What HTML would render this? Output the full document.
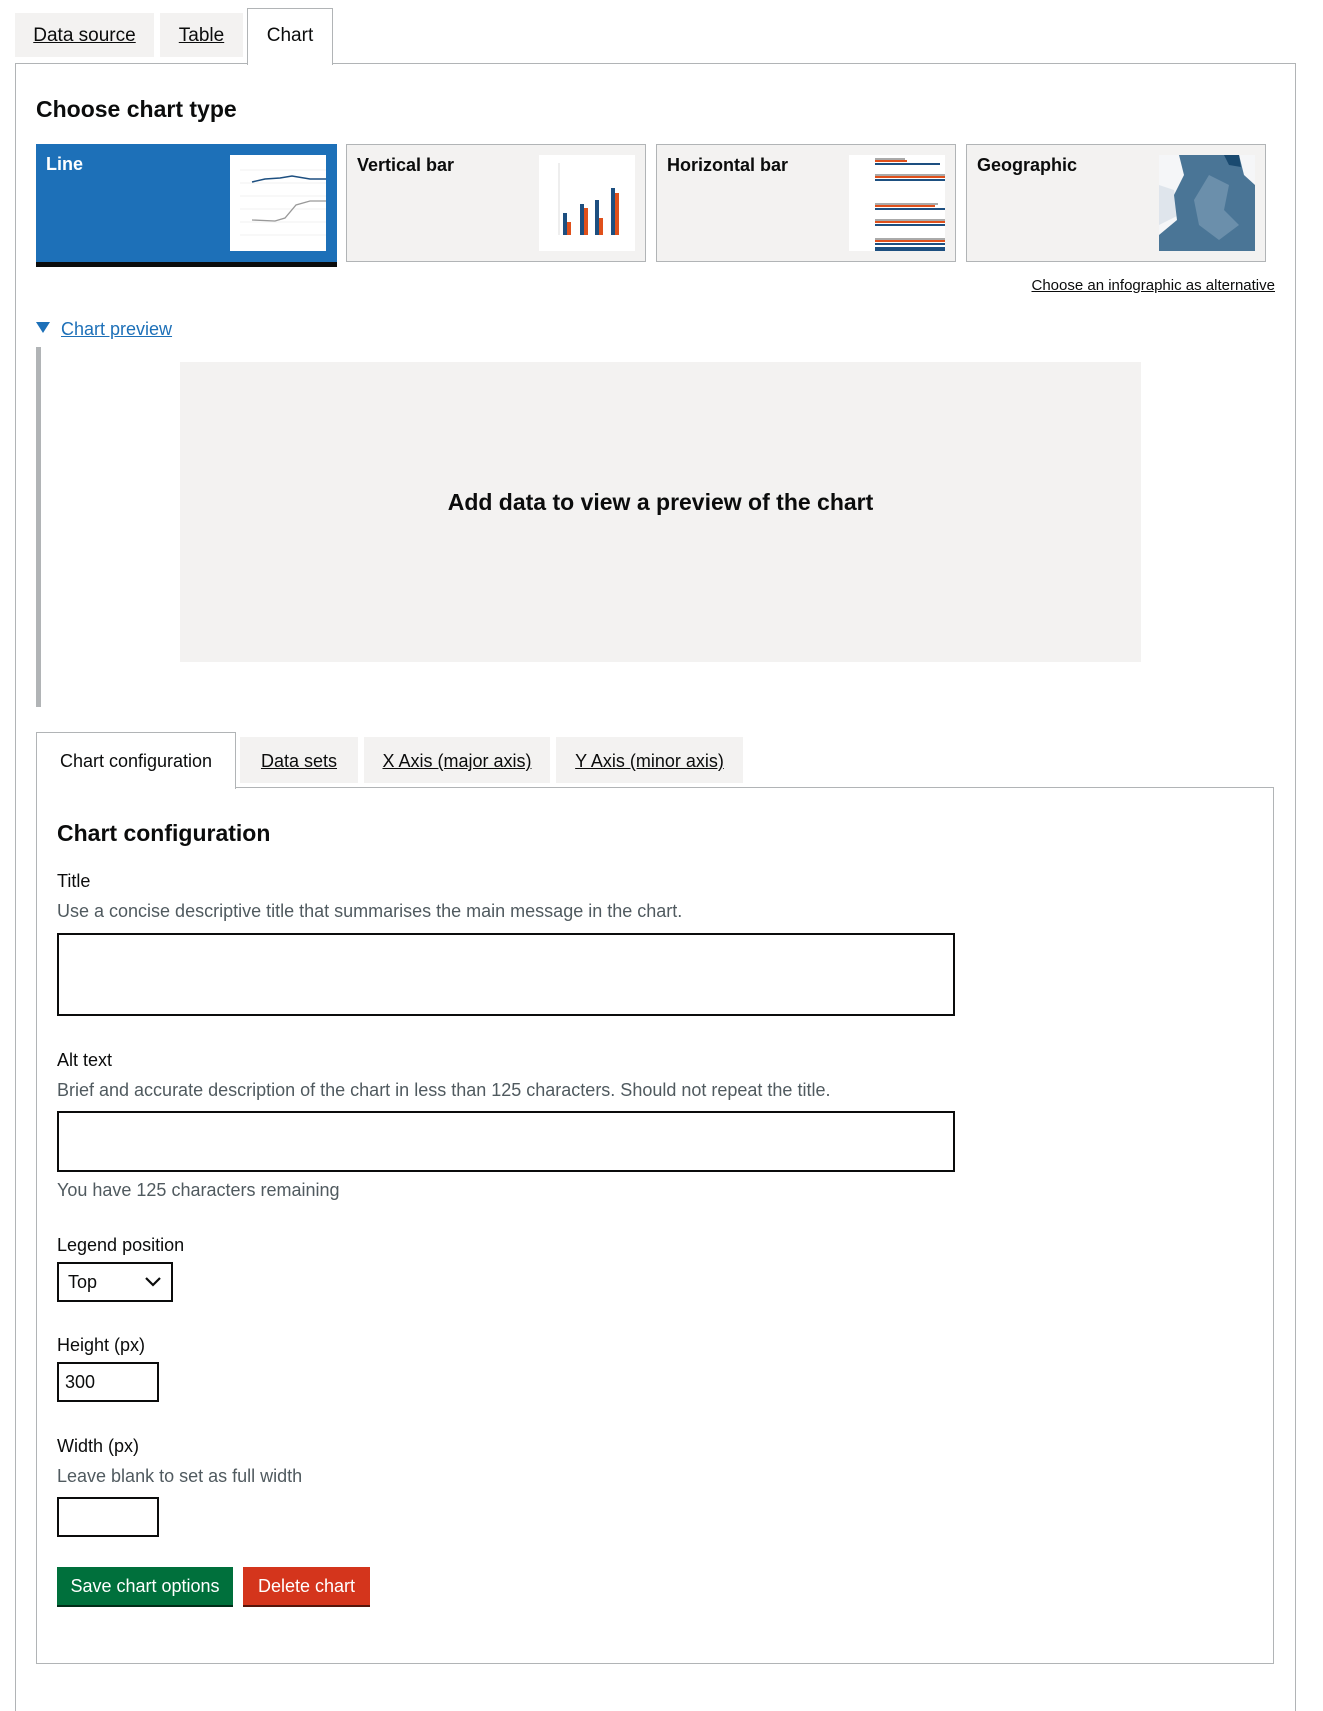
<!DOCTYPE html>
<html style="overflow:hidden;width:1323px;height:1711px"><head><meta charset="utf-8"><style>
*{box-sizing:border-box;margin:0;padding:0}
body{width:1323px;height:1711px;background:#fff;font-family:"Liberation Sans",Arial,sans-serif;color:#0b0c0c;position:relative;overflow:hidden}
.a{position:absolute}
.tab{position:absolute;background:#f3f2f1;font-size:19px;text-align:center;text-decoration:underline;color:#0b0c0c}
.card{position:absolute;background:#f3f2f1;border:1px solid #b1b4b6;font-weight:bold;font-size:18px;padding:10px 0 0 10px}
.thumb{position:absolute;background:#fff}
.lbl{position:absolute;left:57px;font-size:18px}
.hint{position:absolute;left:57px;font-size:18px;color:#505a5f}
.inp{position:absolute;left:57px;border:2px solid #0b0c0c;background:#fff}
</style></head><body>
<div class="a" style="left:15px;top:63px;width:1281px;height:1648px;border:1px solid #b1b4b6;border-bottom:none"></div>
<div class="tab" style="left:15px;top:13px;width:139px;height:44px;line-height:46px">Data source</div>
<div class="tab" style="left:160px;top:13px;width:83px;height:44px;line-height:46px">Table</div>
<div class="a" style="left:247px;top:8px;width:86px;height:57px;background:#fff;border:1px solid #b1b4b6;border-bottom:none;font-size:19px;text-align:center;line-height:54px">Chart</div>

<div class="a" style="left:36px;top:96px;font-size:23px;font-weight:bold">Choose chart type</div>

<div class="card" style="left:36px;top:144px;width:301px;height:123px;background:#1d70b8;border:none;border-bottom:5px solid #0b0c0c;color:#fff">Line
<svg class="thumb" style="left:194px;top:11px" width="96" height="96" viewBox="0 0 96 96"><g stroke="#eee" stroke-width="0.7"><line x1="10" y1="15" x2="96" y2="15"/><line x1="10" y1="28" x2="96" y2="28"/><line x1="10" y1="41" x2="96" y2="41"/><line x1="10" y1="54" x2="96" y2="54"/><line x1="10" y1="67" x2="96" y2="67"/><line x1="10" y1="80" x2="96" y2="80"/></g><polyline points="22,27 35,24 50,23 62,21 80,24 96,24" fill="none" stroke="#1d4f80" stroke-width="1.5"/><polyline points="22,65 45,66 55,63 66,50 80,46 96,46" fill="none" stroke="#999" stroke-width="1.3"/></svg></div>
<div class="card" style="left:346px;top:144px;width:300px;height:118px">Vertical bar
<svg class="thumb" style="left:192px;top:10px" width="96" height="96" viewBox="0 0 96 96"><line x1="20" y1="8" x2="20" y2="80" stroke="#ddd"/><rect x="24" y="58" width="4" height="22" fill="#1d4f80"/><rect x="28" y="67" width="4" height="13" fill="#e0501b"/><rect x="41" y="49" width="4" height="31" fill="#1d4f80"/><rect x="45" y="53" width="4" height="27" fill="#e0501b"/><rect x="56" y="45" width="4" height="35" fill="#1d4f80"/><rect x="60" y="63" width="4" height="17" fill="#e0501b"/><rect x="72" y="33" width="4" height="47" fill="#1d4f80"/><rect x="76" y="38" width="4" height="42" fill="#e0501b"/></svg></div>
<div class="card" style="left:656px;top:144px;width:300px;height:118px">Horizontal bar
<svg class="thumb" style="left:192px;top:10px" width="96" height="96" viewBox="0 0 96 96"><g><rect x="26" y="3" width="30" height="2" fill="#aaa"/><rect x="26" y="5" width="32" height="2" fill="#e0501b"/><rect x="26" y="8" width="65" height="2" fill="#1d4f80"/><rect x="26" y="19" width="70" height="2" fill="#aaa"/><rect x="26" y="21" width="70" height="2" fill="#e0501b"/><rect x="26" y="24" width="70" height="2" fill="#1d4f80"/><rect x="26" y="48" width="63" height="2" fill="#aaa"/><rect x="26" y="50" width="60" height="2" fill="#e0501b"/><rect x="26" y="53" width="70" height="2" fill="#1d4f80"/><rect x="26" y="64" width="70" height="2" fill="#aaa"/><rect x="26" y="66" width="70" height="2" fill="#e0501b"/><rect x="26" y="69" width="70" height="2" fill="#1d4f80"/><rect x="26" y="83" width="70" height="2" fill="#aaa"/><rect x="26" y="85" width="70" height="2" fill="#e0501b"/><rect x="26" y="88" width="70" height="2" fill="#1d4f80"/><rect x="26" y="92" width="70" height="4" fill="#1d4f80"/></g></svg></div>
<div class="card" style="left:966px;top:144px;width:300px;height:118px">Geographic
<svg class="thumb" style="left:192px;top:10px;background:#f5f6f8" width="96" height="96" viewBox="0 0 96 96"><path d="M0,30 L15,35 L20,60 L0,70 Z" fill="#dfe5ec"/><path d="M20,0 L80,0 L85,20 L96,30 L96,60 L96,96 L0,96 L0,80 L18,65 L15,40 L25,20 Z" fill="#4a7596"/><path d="M50,20 L70,30 L65,55 L80,70 L60,85 L40,70 L35,45 Z" fill="#6b8fab"/><path d="M65,0 L80,0 L82,12 L70,10 Z" fill="#1a4a70"/></svg></div>
<div class="a" style="left:1025px;top:277px;font-size:15px;text-decoration:underline;width:250px;text-align:right">Choose an infographic as alternative</div>

<div class="a" style="left:36px;top:322px;width:0;height:0;border-left:7px solid transparent;border-right:7px solid transparent;border-top:11px solid #1d70b8"></div>
<div class="a" style="left:61px;top:319px;font-size:18px;color:#1d70b8;text-decoration:underline">Chart preview</div>
<div class="a" style="left:36px;top:347px;width:5px;height:360px;background:#b1b4b6"></div>
<div class="a" style="left:180px;top:362px;width:961px;height:300px;background:#f3f2f1;font-size:23px;font-weight:bold;text-align:center;line-height:280px">Add data to view a preview of the chart</div>

<div class="a" style="left:36px;top:787px;width:1238px;height:877px;border:1px solid #b1b4b6"></div>
<div class="a" style="left:36px;top:732px;width:200px;height:57px;background:#fff;border:1px solid #b1b4b6;border-bottom:none;font-size:18px;text-align:center;line-height:56px">Chart configuration</div>
<div class="tab" style="left:240px;top:737px;width:118px;height:46px;line-height:48px;font-size:18px">Data sets</div>
<div class="tab" style="left:364px;top:737px;width:186px;height:46px;line-height:48px;font-size:18px">X Axis (major axis)</div>
<div class="tab" style="left:556px;top:737px;width:187px;height:46px;line-height:48px;font-size:18px">Y Axis (minor axis)</div>

<div class="a" style="left:57px;top:820px;font-size:23px;font-weight:bold">Chart configuration</div>
<div class="lbl" style="top:871px">Title</div>
<div class="hint" style="top:901px">Use a concise descriptive title that summarises the main message in the chart.</div>
<div class="inp" style="top:933px;width:898px;height:83px"></div>
<div class="lbl" style="top:1050px">Alt text</div>
<div class="hint" style="top:1080px">Brief and accurate description of the chart in less than 125 characters. Should not repeat the title.</div>
<div class="inp" style="top:1111px;width:898px;height:61px"></div>
<div class="hint" style="top:1180px">You have 125 characters remaining</div>
<div class="lbl" style="top:1235px">Legend position</div>
<div class="inp" style="top:1262px;width:116px;height:40px;font-size:18px;padding:8px 0 0 9px">Top
<svg class="a" style="left:85px;top:12px" width="18" height="12" viewBox="0 0 18 12"><polyline points="2,2 9,9 16,2" fill="none" stroke="#0b0c0c" stroke-width="2.2"/></svg></div>
<div class="lbl" style="top:1335px">Height (px)</div>
<div class="inp" style="top:1362px;width:102px;height:40px;font-size:18px;padding:8px 0 0 6px">300</div>
<div class="lbl" style="top:1436px">Width (px)</div>
<div class="hint" style="top:1466px">Leave blank to set as full width</div>
<div class="inp" style="top:1497px;width:102px;height:40px"></div>
<div class="a" style="left:57px;top:1567px;width:176px;height:40px;background:#00703c;border-bottom:2px solid #002d18;color:#fff;font-size:18px;text-align:center;line-height:38px">Save chart options</div>
<div class="a" style="left:243px;top:1567px;width:127px;height:40px;background:#d4351c;border-bottom:2px solid #55150b;color:#fff;font-size:18px;text-align:center;line-height:38px">Delete chart</div>
</body></html>
